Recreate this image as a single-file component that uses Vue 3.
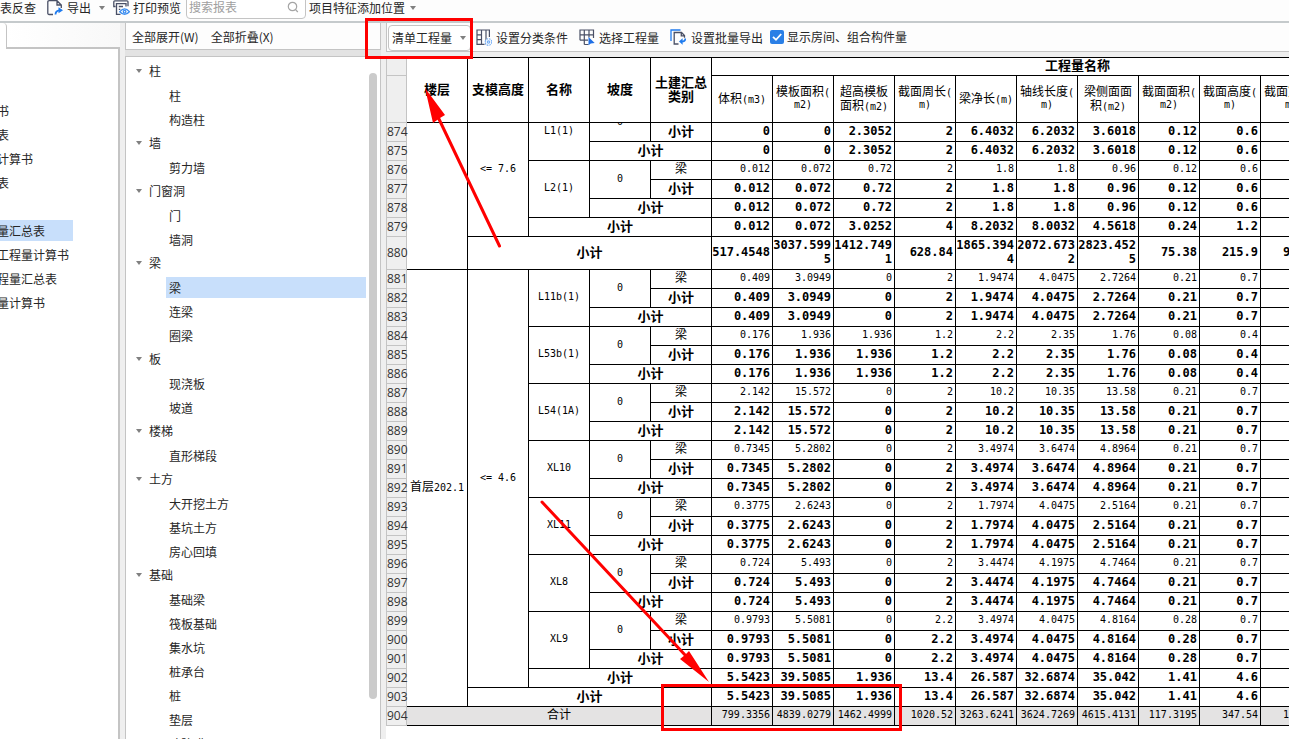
<script setup>
import { ref } from 'vue'

const reports = ['书', '表', '计算书', '表', '', '量汇总表', '工程量计算书', '程量汇总表', '量计算书']
const activeReport = 5

const tree = [
  { name: '柱', children: ['柱', '构造柱'] },
  { name: '墙', children: ['剪力墙'] },
  { name: '门窗洞', children: ['门', '墙洞'] },
  { name: '梁', children: ['梁', '连梁', '圈梁'] },
  { name: '板', children: ['现浇板', '坡道'] },
  { name: '楼梯', children: ['直形梯段'] },
  { name: '土方', children: ['大开挖土方', '基坑土方', '房心回填'] },
  { name: '基础', children: ['基础梁', '筏板基础', '集水坑', '桩承台', '桩', '垫层', '砖胎膜'] }
]
const isActive = (group, item) => group === '梁' && item === '梁'

const showRooms = ref(true)
const keyword = ref('')
const quantityType = ref('清单工程量')

const COLS = 12
const measures = [
  ['体积(m3)'], ['模板面积(', 'm2)'], ['超高模板', '面积(m2)'], ['截面周长(', 'm)'], ['梁净长(m)'],
  ['轴线长度(', 'm)'], ['梁侧面面', '积(m2)'], ['截面面积(', 'm2)'], ['截面高度(', 'm)'], ['截面宽度(', 'm)'], [''], ['']
]

const sub = (span) => ({ t: '小计', b: true, c: span })
const pad = (text) => {
  const list = text.split(' ')
  while (list.length < COLS) list.push('')
  return list
}

const rows = []
let no = 873
const add = (cells, values, opts = {}) => rows.push({ no: no++, cells, values: pad(values), bold: true, ...opts })
const member = (lead, name, values) => {
  add([...lead, { t: name, r: 3 }, { t: '0', r: 2 }, { t: '梁' }], values, { bold: false })
  add([sub(1)], values)
  add([sub(2)], values)
}

member([{ t: '', r: 8 }, { t: '<= 7.6', r: 7 }], 'L1(1)', '0 0 2.3052 2 6.4032 6.2032 3.6018 0.12 0.6')
member([], 'L2(1)', '0.012 0.072 0.72 2 1.8 1.8 0.96 0.12 0.6')
add([sub(3)], '0.012 0.072 3.0252 4 8.2032 8.0032 4.5618 0.24 1.2')
add([sub(4)], '517.4548 3037.5995 1412.7491 628.84 1865.3944 2072.6732 2823.4525 75.38 215.9 94.15', { tall: true })
member([{ t: '首层202.1', r: 23 }, { t: '<= 4.6', r: 22 }], 'L11b(1)', '0.409 3.0949 0 2 1.9474 4.0475 2.7264 0.21 0.7')
member([], 'L53b(1)', '0.176 1.936 1.936 1.2 2.2 2.35 1.76 0.08 0.4')
member([], 'L54(1A)', '2.142 15.572 0 2 10.2 10.35 13.58 0.21 0.7')
member([], 'XL10', '0.7345 5.2802 0 2 3.4974 3.6474 4.8964 0.21 0.7')
member([], 'XL11', '0.3775 2.6243 0 2 1.7974 4.0475 2.5164 0.21 0.7')
member([], 'XL8', '0.724 5.493 0 2 3.4474 4.1975 4.7464 0.21 0.7')
member([], 'XL9', '0.9793 5.5081 0 2.2 3.4974 4.0475 4.8164 0.28 0.7')
add([sub(3)], '5.5423 39.5085 1.936 13.4 26.587 32.6874 35.042 1.41 4.6')
add([sub(4)], '5.5423 39.5085 1.936 13.4 26.587 32.6874 35.042 1.41 4.6')
add([{ t: '合计', c: 5 }], '799.3356 4839.0279 1462.4999 1020.52 3263.6241 3624.7269 4615.4131 117.3195 347.54 152.08', { bold: false, total: true })

// Latin runs are set in a narrower size than the ideographs beside them.
const runs = (text) => text.match(/[\u4e00-\u9fff]+|[^\u4e00-\u9fff]+/g) || []
const isHan = (text) => /[\u4e00-\u9fff]/.test(text)
</script>

<template>
  <div class="app">
    <header class="topbar">
      <button class="tool">表反查</button>
      <button class="tool export">
        <svg width="16" height="16" viewBox="0 0 16 16" fill="none" stroke="#4a5066" stroke-width="1.3">
          <path d="M6 14.5H2.2Q.8 14.5.8 13V2Q.8.7 2.2.7H10L14.3 5v3M10 .7V5h4.3" />
          <path d="M8.5 14.5q0-4 4-4.2" stroke="#1f7bee" stroke-width="1.8" />
          <path d="M11.5 7.2 16 10.3l-4.5 3z" fill="#1f7bee" stroke="none" />
        </svg>
        <span>导出</span>
        <i class="caret"></i>
      </button>
      <button class="tool print">
        <svg width="17" height="16" viewBox="0 0 17 16" fill="none" stroke="#4a5066" stroke-width="1.3">
          <path d="M2.5 6.5H.8V1.7Q.8.8 1.8.8H14q1 0 1 .9v4.5M2.8 3.6H13v3M3.5 3.6v10.7h4M5.8 6.5H10M5.8 9.3h1.5" />
          <path d="M6.8 11.7q4.8-5.6 9.6 0-4.8 5.4-9.6 0z" stroke="#3b8df0" />
          <circle cx="11.6" cy="11.7" r="1.3" stroke="#3b8df0" />
        </svg>
        <span>打印预览</span>
      </button>
      <label class="search">
        <input v-model="keyword" type="text" placeholder="搜索报表" aria-label="搜索报表" />
        <svg width="12" height="12" viewBox="0 0 12 12" fill="none" stroke="#a5a5a5" stroke-width="1.2">
          <circle cx="5.5" cy="5.5" r="4.2" /><path d="m8.6 8.6 2.2 2.4" />
        </svg>
      </label>
      <button class="tool feature"><span>项目特征添加位置</span><i class="caret"></i></button>
    </header>

    <div class="body">
      <aside class="reports">
        <div class="tabs"><div class="tab"></div><div class="rest"></div></div>
        <ul>
          <li v-for="(r, i) in reports" :key="i"><span :class="{ active: i === activeReport }">{{ r }}</span></li>
        </ul>
      </aside>

      <section class="members">
        <div class="bar">
          <button class="tool">全部展开(W)</button>
          <button class="tool">全部折叠(X)</button>
        </div>
        <div class="tree">
          <ul>
            <li v-for="g in tree" :key="g.name">
              <div class="node"><i class="caret"></i><span>{{ g.name }}</span></div>
              <ul class="leaves">
                <li v-for="c in g.children" :key="c" class="leaf" :class="{ active: isActive(g.name, c) }">{{ c }}</li>
              </ul>
            </li>
          </ul>
          <div class="track"><div class="thumb"></div></div>
        </div>
      </section>

      <main class="report">
        <div class="bar">
          <label class="pick">
            <select v-model="quantityType" aria-label="工程量类型"><option>清单工程量</option></select>
            <i class="caret"></i>
          </label>
          <button class="tool">
            <svg width="16" height="17" viewBox="0 0 16 17" fill="none" stroke="#4a5066" stroke-width="1.2">
              <path d="M8.500 15.400H1V1h12.400v7M5.500 1v14.400M10 1v14.400M1 5.800h4.500M1 10.600h4.500" />
              <circle cx="12.500" cy="13" r="3.300" fill="#fdfdfd" stroke="#75aef5" stroke-dasharray="1.700 .9" />
              <circle cx="12.500" cy="13" r="1.200" stroke="#75aef5" />
            </svg>
            <span>设置分类条件</span>
          </button>
          <button class="tool">
            <svg width="16" height="17" viewBox="0 0 16 17" fill="none" stroke="#4a5066" stroke-width="1.2">
              <path d="M9 11.2H1M14.5 9V1H1v4.8h13.5M5.3 1v14.5M10 1v7.500M5.3 15.500h4.200M1 5.800v5.400" />
              <path d="M9.500 8v8.300l2.300-1.900 3.900-.5z" fill="#1f6fe5" stroke="none" />
            </svg>
            <span>选择工程量</span>
          </button>
          <button class="tool">
            <svg width="17" height="17" viewBox="0 0 17 17" fill="none" stroke="#4a5066" stroke-width="1.3">
              <path d="M1 12V1h9.5" stroke="#1f7bee" />
              <path d="M8.5 15H4.2V3.5h7.3l3 3v2.3M11.3 3.5v3.3h3.2" />
              <path d="M15.2 9.5q.4 3-3.5 3" stroke="#1f7bee" stroke-width="1.7" />
              <path d="M12.6 9.3v6.4L9 12.5z" fill="#1f7bee" stroke="none" />
            </svg>
            <span>设置批量导出</span>
          </button>
          <label class="check">
            <input v-model="showRooms" type="checkbox" />
            <svg width="14" height="14" viewBox="0 0 14 14" fill="none" stroke="#fff" stroke-width="1.8"><path d="m3 6.8 3 3L11.2 4" /></svg>
            <span>显示房间、组合构件量</span>
          </label>
        </div>

        <div class="sheet">
          <table class="head">
            <colgroup><col class="no" /><col v-for="n in 5 + COLS" :key="n" class="c" /></colgroup>
            <thead>
              <tr class="h1">
                <th class="no"></th>
                <th rowspan="2">楼层</th><th rowspan="2">支模高度</th><th rowspan="2">名称</th><th rowspan="2">坡度</th>
                <th rowspan="2">土建汇总<br />类别</th>
                <th :colspan="COLS">工程量名称</th>
              </tr>
              <tr class="h2">
                <th class="no"></th>
                <th v-for="(m, i) in measures" :key="i" class="measure">
                  <div v-for="(line, j) in m" :key="j"><span v-for="(s, k) in runs(line)" :key="k" :class="{ han: isHan(s) }">{{ s }}</span></div>
                </th>
              </tr>
            </thead>
          </table>
          <div class="scroll">
            <table class="data">
              <colgroup><col class="no" /><col v-for="n in 5 + COLS" :key="n" class="c" /></colgroup>
              <tbody>
                <tr v-for="row in rows" :key="row.no" :class="{ tall: row.tall, total: row.total }">
                  <th class="no">{{ row.no }}</th>
                  <td v-for="(cell, i) in row.cells" :key="'k' + i" :rowspan="cell.r || 1" :colspan="cell.c || 1" :class="{ bold: cell.b }">
                    <span v-for="(s, k) in runs(cell.t)" :key="k" :class="{ han: isHan(s) }">{{ s }}</span>
                  </td>
                  <td v-for="(v, i) in row.values" :key="'v' + i" class="num" :class="{ bold: row.bold }">{{ v }}</td>
                </tr>
              </tbody>
            </table>
          </div>
        </div>
      </main>
    </div>

    <svg class="marks" width="1289" height="739" viewBox="0 0 1289 739" fill="none" stroke="#f00" stroke-width="3">
      <rect x="366.5" y="19.5" width="105" height="38" />
      <rect x="662.5" y="685.5" width="238" height="44" />
      <path d="M499.5 246 438 117M542 502l144 154" stroke-linecap="round" />
      <path d="M425 88l20 27-5 3-7 5zM709 682l-20-31-4 4-5 4z" fill="#f00" stroke="none" />
    </svg>
  </div>
</template>

<style>
html, body { margin: 0; overflow: hidden; }
</style>

<style scoped>
.app {
  position: relative;
  display: flex;
  flex-direction: column;
  height: 100vh;
  overflow: hidden;
  background: #efefef;
  color: #262626;
  font: 12px/16px "Noto Sans CJK SC", sans-serif;
}
ul { list-style: none; margin: 0; padding: 0; }
button, input, select { font: inherit; color: inherit; }
.tool {
  display: flex;
  align-items: center;
  flex: none;
  padding: 0;
  border: 0;
  background: none;
  white-space: nowrap;
}
.caret {
  flex: none;
  width: 0;
  height: 0;
  border: 3px solid transparent;
  border-top: 4px solid #808080;
  border-bottom: 0;
}

.topbar {
  flex: none;
  display: flex;
  align-items: flex-end;
  box-sizing: border-box;
  height: 23px;
  padding-bottom: 2px;
  border-bottom: 2px solid #c5cacc;
  background: #fdfdfd;
  overflow: hidden;
}
.topbar .tool { height: 22px; }
.export { margin-left: 11px; gap: 4px; }
.export .caret { margin-left: 4px; }
.print { margin-left: 8px; gap: 3px; }
.search {
  display: flex;
  align-items: center;
  flex: none;
  box-sizing: border-box;
  width: 120px;
  height: 24px;
  margin-left: 5px;
  padding: 0 6px 0 2px;
  border: 1px solid #c4c4c4;
  border-radius: 4px;
  background: #fff;
}
.search input { flex: 1; min-width: 0; padding: 0; border: 0; outline: 0; background: none; }
.search input::placeholder { color: #a0a0a0; opacity: 1; }
.feature { margin-left: 3px; gap: 5px; }

.body { flex: 1; display: flex; min-height: 0; }

.reports {
  flex: none;
  display: flex;
  flex-direction: column;
  width: 120px;
  overflow: hidden;
}
.tabs { display: flex; height: 26px; flex: none; background: #fff; }
.tab { width: 6px; border-right: 1px solid #c4c4c4; border-radius: 0 4px 0 0; }
.rest { flex: 1; border-bottom: 2px solid #c4c4c4; background: linear-gradient(90deg, #fff, #f8f8f8); }
.reports ul { flex: 1; padding-top: 49px; border-right: 2px solid #c4c4c4; background: #fff; }
.reports li { display: flex; align-items: center; height: 24px; margin-left: -3px; }
.reports li span { line-height: 21px; white-space: nowrap; }
.reports .active { width: 76px; background: #c8dffb; }

.members { flex: none; display: flex; flex-direction: column; width: 256px; margin: 0 1px 0 5px; background: #e3e3e3; }
.members .bar {
  display: flex;
  align-items: center;
  gap: 12px;
  flex: none;
  box-sizing: border-box;
  height: 27px;
  padding: 2px 0 0 6px;
  border: 1px solid #c4c4c4;
  border-top: 0;
  background: #fdfdfd;
}
.tree {
  flex: 1;
  display: flex;
  min-height: 0;
  margin-top: 6px;
  border: 1px solid #c4c4c4;
  border-bottom: 0;
  background: #fff;
  overflow: hidden;
}
.tree > ul { flex: 1; padding-top: 2px; }
.node { display: flex; align-items: center; gap: 7px; height: 24px; padding-left: 10px; }
.leaves { display: flex; flex-direction: column; }
.leaf { height: 21px; margin: 2px 3px 1px 40px; padding-left: 3px; line-height: 21px; }
.leaf.active { background: #c8dffb; }
.track { flex: none; width: 11px; padding-top: 16px; }
.thumb { width: 8px; height: 94%; border-radius: 4px; background: #cbcbcb; }

.report { flex: 1; display: flex; flex-direction: column; min-width: 0; margin-left: 4px; }
.report .bar {
  flex: none;
  display: flex;
  align-items: center;
  box-sizing: border-box;
  height: 29px;
  padding-top: 1px;
  border: 1px solid #c4c4c4;
  border-width: 0 0 1px 1px;
  background: #fdfdfd;
  overflow: hidden;
}
.pick {
  display: flex;
  align-items: center;
  box-sizing: border-box;
  width: 83px;
  height: 26px;
  margin: 0 5px 0 1px;
  padding: 0 4px 0 3px;
  border: 1px solid #c4c4c4;
  border-radius: 4px;
  background: #fff;
}
.pick select { flex: 1; padding: 0; border: 0; background: none; appearance: none; outline: 0; }
.report .tool { gap: 4px; margin-right: 11px; }
.check { display: flex; align-items: center; gap: 3px; margin: 0 0 2px -4px; white-space: nowrap; }
.check input { appearance: none; width: 14px; height: 14px; margin: 0; border-radius: 2px; background: #2a7fe6; }
.check svg { margin: 0 0 0 -17px; pointer-events: none; }

.sheet { flex: 1; margin-top: 5px; min-height: 0; background: #fff; overflow: hidden; color: #000; }
table { table-layout: fixed; width: 1058px; border-collapse: separate; border-spacing: 0; }
col.no { width: 21px; }
col.c { width: 61px; }
th, td {
  box-sizing: border-box;
  padding: 0 0 2px;
  border: 1px solid #000;
  border-width: 0 1px 1px 0;
  font-size: 10px;
  line-height: 14px;
  font-family: "DejaVu Sans Mono", "Noto Sans CJK SC", monospace;
  font-weight: 400;
  text-align: center;
  vertical-align: middle;
}
.han { font-family: "Noto Sans CJK SC", sans-serif; font-size: 12px; }
.head th { padding-bottom: 3px; font-family: "Noto Sans CJK SC", sans-serif; font-size: 13px; font-weight: 700; }
.head .h1 th { border-top: 1px solid #000; }
.head .h1 { height: 19px; }
.head .h2 { height: 47px; }
.head th.measure { font-family: "DejaVu Sans Mono", monospace; font-size: 10px; font-weight: 400; white-space: nowrap; }
.measure div { height: 14px; }
.sheet th.no {
  padding: 0;
  border: 1px solid #c4c4c4;
  border-width: 0 1px 1px 1px;
  background: #efefef;
  color: #333;
  font: 12px/18px "Open Sans", sans-serif;
}
.data { margin-top: -19px; }
.scroll { overflow: hidden; }
.data tr { height: 19px; }
.data tr.tall { height: 33px; }
.data .bold { font-size: 12px; font-weight: 700; }
.data .bold .han { font-size: 13px; }
.data .num { padding-right: 2px; text-align: right; word-break: break-all; }
.data .total td { background: #e4e3e3; }

.marks { position: absolute; left: 0; top: 0; pointer-events: none; }
</style>
